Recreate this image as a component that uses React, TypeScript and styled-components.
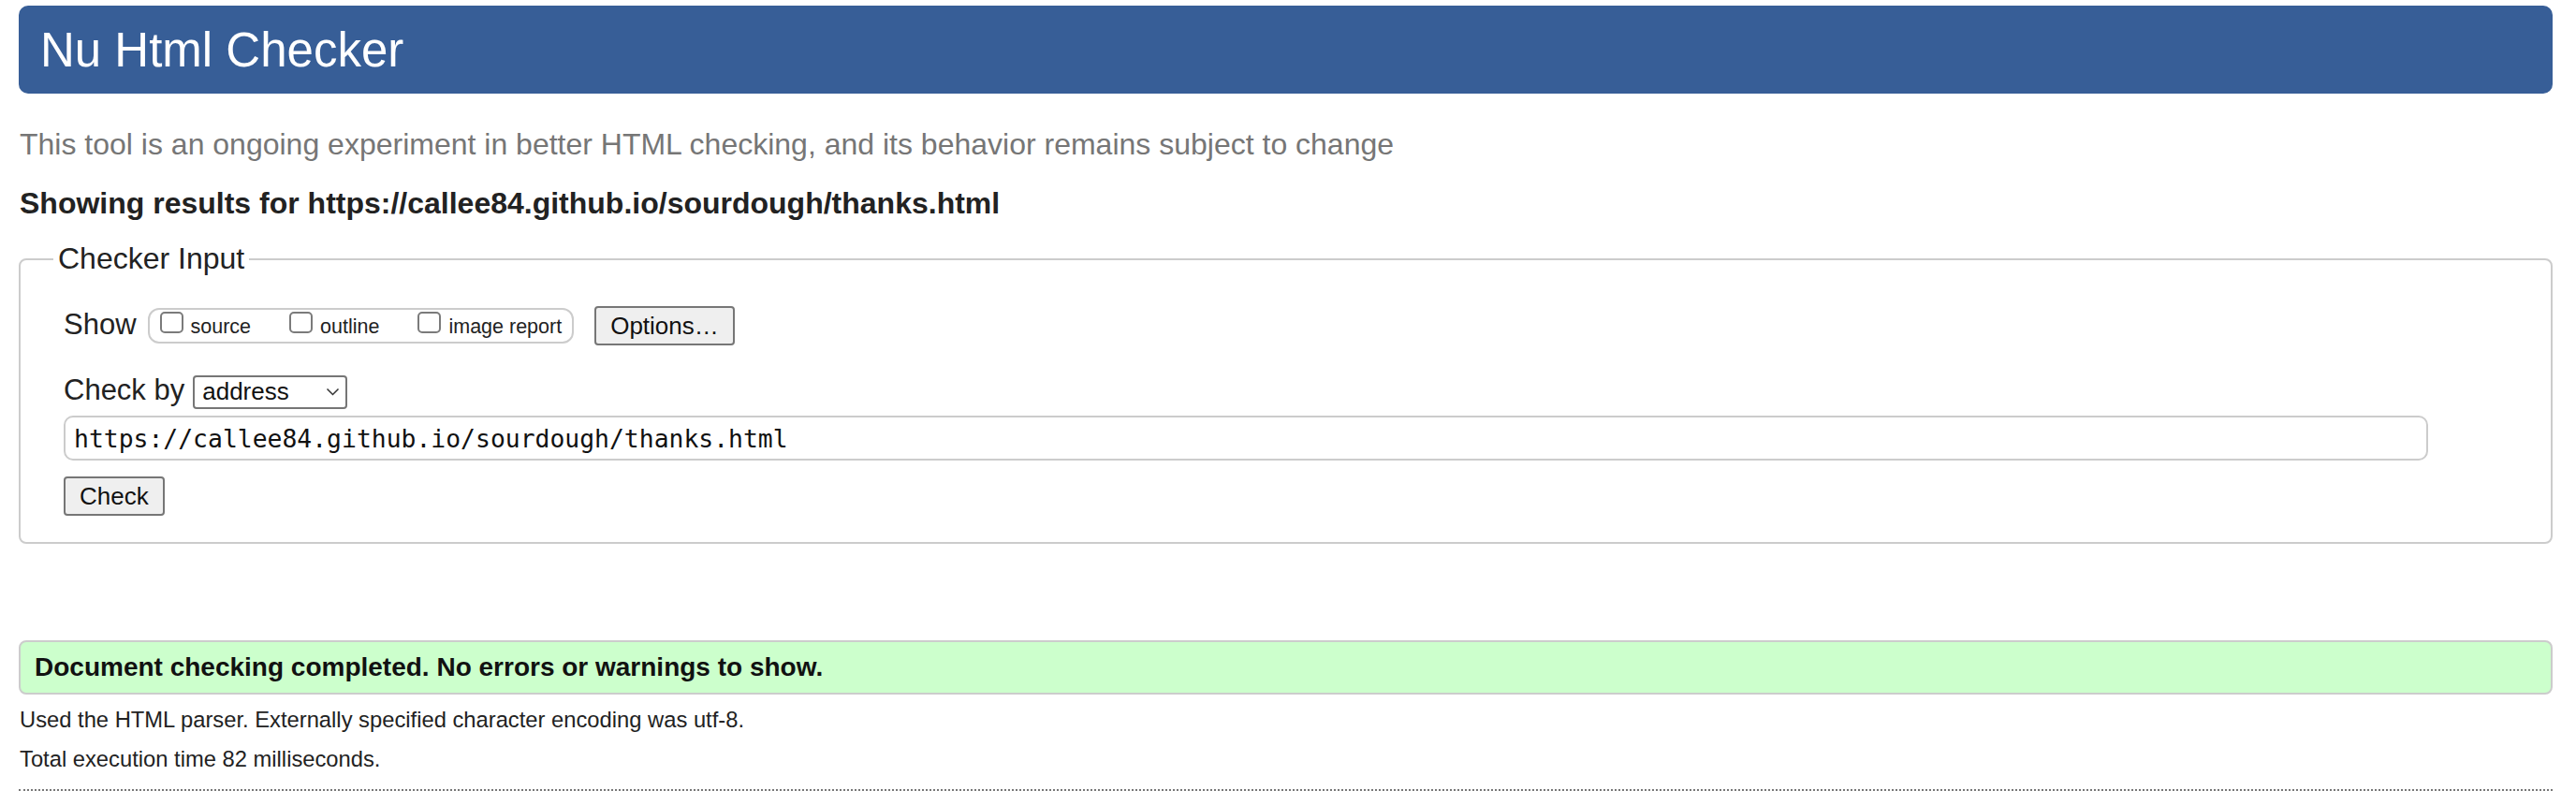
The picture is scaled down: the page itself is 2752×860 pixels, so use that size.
import React from "react";
import styled, { createGlobalStyle } from "styled-components";

const GlobalStyle = createGlobalStyle`
  html, body { margin: 0; padding: 0; background: #ffffff; }
  body {
    font-family: "Liberation Sans", Arial, Helvetica, sans-serif;
    color: #222222;
  }
  * { box-sizing: border-box; }
`;

const Page = styled.div`
  display: flex;
  flex-direction: column;
  padding: 6px 25px 0 20px;
`;

const Header = styled.header`
  height: 94px;
  display: flex;
  align-items: center;
  padding-left: 23px;
  background: #375e97;
  border-radius: 10px;
`;

const Title = styled.h1`
  margin: 0;
  font-size: 51px;
  font-weight: 400;
  line-height: normal;
  color: #ffffff;
`;

const Intro = styled.p`
  margin: 36px 0 0 1px;
  font-size: 32px;
  line-height: 37px;
  color: #767676;
`;

const ResultsFor = styled.h2`
  margin: 26px 0 0 1px;
  font-size: 32px;
  line-height: 37px;
  font-weight: 700;
  color: #222222;
`;

const Fieldset = styled.fieldset`
  margin: 22px 0 0 0;
  padding: 32px 0 28px 35px;
  border: 2px solid #cccccc;
  border-radius: 8px;
  min-width: 0;
`;

const Legend = styled.legend`
  padding: 0 5px;
  font-size: 32px;
  line-height: normal;
  color: #222222;
`;

const FieldBody = styled.div`
  display: flex;
  flex-direction: column;
  align-items: flex-start;
  padding: 0 131px 0 11px;
`;

const Row = styled.div<{ $top?: number }>`
  display: flex;
  align-items: center;
  margin-top: ${(p) => p.$top ?? 0}px;
`;

const RowLabel = styled.span`
  font-size: 31px;
  line-height: normal;
  margin-bottom: 3px;
  color: #222222;
`;

const OptionGroup = styled.div`
  display: flex;
  align-items: center;
  gap: 41px;
  height: 38px;
  margin-left: 12px;
  padding: 0 11px 1px;
  border: 2px solid #cccccc;
  border-radius: 12px;
`;

const OptionItem = styled.label`
  display: flex;
  align-items: baseline;
  gap: 8px;
  font-size: 21.5px;
  line-height: normal;
  color: #222222;
`;

const Box = styled.input`
  appearance: none;
  -webkit-appearance: none;
  margin: 0 0 2px;
  width: 25px;
  height: 23px;
  border: 2px solid #7b7b7b;
  border-radius: 5px;
  background: #ffffff;
`;

const Button = styled.button<{ $pad: number }>`
  height: 42px;
  padding: 0 ${(p) => p.$pad}px;
  font-family: "Liberation Sans", Arial, Helvetica, sans-serif;
  font-size: 26px;
  color: #111111;
  background: #efefef;
  border: 2px solid #767676;
  border-radius: 4px;
`;

const OptionsButton = styled(Button)`
  margin-left: 22px;
`;

const Select = styled.div`
  display: flex;
  align-items: center;
  justify-content: space-between;
  width: 165px;
  height: 36px;
  margin-left: 9px;
  padding: 0 6px 0 8px;
  font-size: 26px;
  color: #111111;
  background: #ffffff;
  border: 2px solid #767676;
  border-radius: 4px;
`;

const UrlInput = styled.input`
  align-self: stretch;
  height: 48px;
  margin: 6px 0 0;
  padding: 0 9px;
  font-family: "DejaVu Sans Mono", Menlo, monospace;
  font-size: 26.4px;
  color: #111111;
  background: #ffffff;
  border: 2px solid #cccccc;
  border-radius: 10px;
  outline: none;
`;

const CheckButton = styled(Button)`
  margin-top: 17px;
`;

const Success = styled.div`
  display: flex;
  align-items: center;
  height: 58px;
  margin-top: 103px;
  padding-left: 15px;
  font-size: 28px;
  font-weight: 700;
  color: #111111;
  background: #ccffcc;
  border: 2px solid #cccccc;
  border-radius: 8px;
`;

const Notes = styled.div`
  display: flex;
  flex-direction: column;
  gap: 12px;
  margin-top: 12px;
  padding-left: 1px;
  font-size: 23.75px;
  line-height: 30px;
  color: #222222;
`;

const Note = styled.p`
  margin: 0;
`;

const Rule = styled.hr`
  margin: 17px 0 0;
  border: 0;
  border-top: 2px dotted #777777;
`;

const Chevron = () => (
  <svg width="15" height="9" viewBox="0 0 15 9" fill="none">
    <path d="M1.5 1.5 L7.5 7.5 L13.5 1.5" stroke="#333" strokeWidth="1.5" />
  </svg>
);

export default function App() {
  return (
    <>
      <GlobalStyle />
      <Page>
        <Header>
          <Title>Nu Html Checker</Title>
        </Header>
        <Intro>
          This tool is an ongoing experiment in better HTML checking, and its behavior remains subject to change
        </Intro>
        <ResultsFor>Showing results for https://callee84.github.io/sourdough/thanks.html</ResultsFor>
        <Fieldset>
          <Legend>Checker Input</Legend>
          <FieldBody>
            <Row>
              <RowLabel>Show</RowLabel>
              <OptionGroup>
                <OptionItem>
                  <Box type="checkbox" />
                  source
                </OptionItem>
                <OptionItem>
                  <Box type="checkbox" />
                  outline
                </OptionItem>
                <OptionItem>
                  <Box type="checkbox" />
                  image report
                </OptionItem>
              </OptionGroup>
              <OptionsButton $pad={15}>Options…</OptionsButton>
            </Row>
            <Row $top={30}>
              <RowLabel>Check by</RowLabel>
              <Select>
                <span>address</span>
                <Chevron />
              </Select>
            </Row>
            <UrlInput type="text" readOnly value="https://callee84.github.io/sourdough/thanks.html" />
            <CheckButton $pad={15}>Check</CheckButton>
          </FieldBody>
        </Fieldset>
        <Success>Document checking completed. No errors or warnings to show.</Success>
        <Notes>
          <Note>Used the HTML parser. Externally specified character encoding was utf-8.</Note>
          <Note>Total execution time 82 milliseconds.</Note>
        </Notes>
        <Rule />
      </Page>
    </>
  );
}
